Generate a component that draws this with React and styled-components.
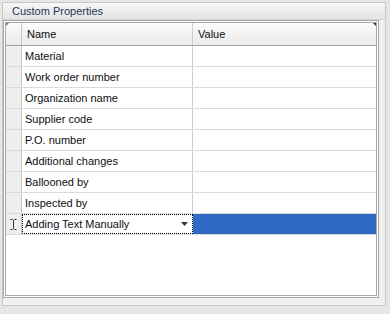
import React from 'react';
import styled, { createGlobalStyle } from 'styled-components';

const GlobalStyle = createGlobalStyle`
  html, body {
    margin: 0;
    padding: 0;
    background: #e6e6e6;
    font-family: "Liberation Sans", Arial, sans-serif;
  }
`

const Page = styled.div`
  width: 390px;
  height: 314px;
  padding: 2px;
  box-sizing: border-box;
  background: #e6e6e6;
`

const Panel = styled.div`
  width: 384px;
  height: 304px;
  box-sizing: border-box;
  border: 1px solid #c8c8c8;
  background: #f0f0f0;
  display: flex;
  flex-direction: column;
`

const TitleBar = styled.div`
  height: 16px;
  flex: none;
  display: flex;
  align-items: center;
  padding-left: 9px;
  font-size: 11px;
  color: #1e395b;
  background: linear-gradient(#f7f7f7, #e3e3e3);
  border-bottom: 1px solid #d4d4d4;
`

const GridFrame = styled.div`
  flex: 1;
  margin: 0 6px 7px 0;
  border: 3px double #a9a9a9;
  background: #fff;
  position: relative;
`

const Corner = styled.div`
  position: absolute;
  top: 0;
  ${p => p.$side}: 0;
  width: 0;
  height: 0;
  border-top: 3px solid ${p => p.$color};
  border-${p => p.$side === 'left' ? 'right' : 'left'}: 3px solid transparent;
`

const Row = styled.div`
  display: grid;
  grid-template-columns: 16px 171px 1fr;
  height: ${p => p.$header ? 23 : 21}px;
  box-sizing: border-box;
  border-bottom: 1px solid ${p => p.$header ? '#a0a0a0' : '#d5dae3'};
  background: ${p => p.$header ? 'linear-gradient(#fbfbfb, #ebebeb)' : '#fff'};
  font-size: 11px;
  color: #0e0e0e;
`

const Indicator = styled.div`
  border-right: 1px solid #c6c6c6;
  background: ${p => p.$header ? 'transparent' : '#eeeeee'};
  display: flex;
  align-items: center;
  justify-content: center;
`

const Cell = styled.div`
  display: flex;
  align-items: center;
  padding-left: ${p => p.$header ? 5 : 3}px;
  border-right: ${p => p.$last ? 'none' : '1px solid #c9ced6'};
  background: ${p => p.$selected ? '#316ac5' : 'transparent'};
  white-space: nowrap;
  overflow: hidden;
`

const EditCell = styled.div`
  display: flex;
  align-items: center;
  justify-content: space-between;
  padding: 0 4px 0 2px;
  border: 1px dotted #000;
`

const rows = [
  'Material',
  'Work order number',
  'Organization name',
  'Supplier code',
  'P.O. number',
  'Additional changes',
  'Ballooned by',
  'Inspected by',
]

const IBeam = () => (
  <svg width="7" height="11" viewBox="0 0 7 11">
    <path d="M0.5 0.5h2l1 1 1-1h2M3.5 1.5v8M0.5 10.5h2l1-1 1 1h2" stroke="#333" fill="none" />
  </svg>
)

const Arrow = () => (
  <svg width="7" height="4" viewBox="0 0 7 4">
    <path d="M0 0h7L3.5 4z" fill="#333" />
  </svg>
)

const App = () => (
  <Page>
    <GlobalStyle />
    <Panel>
      <TitleBar>Custom Properties</TitleBar>
      <GridFrame>
        <Corner $side="left" $color="#b85c5c" />
        <Corner $side="right" $color="#333" />
        <Row $header>
          <Indicator $header />
          <Cell $header>Name</Cell>
          <Cell $header $last>Value</Cell>
        </Row>
        {rows.map(name => (
          <Row key={name}>
            <Indicator />
            <Cell>{name}</Cell>
            <Cell $last />
          </Row>
        ))}
        <Row>
          <Indicator><IBeam /></Indicator>
          <EditCell>
            <span>Adding Text Manually</span>
            <Arrow />
          </EditCell>
          <Cell $last $selected />
        </Row>
      </GridFrame>
    </Panel>
  </Page>
)

export default App;
